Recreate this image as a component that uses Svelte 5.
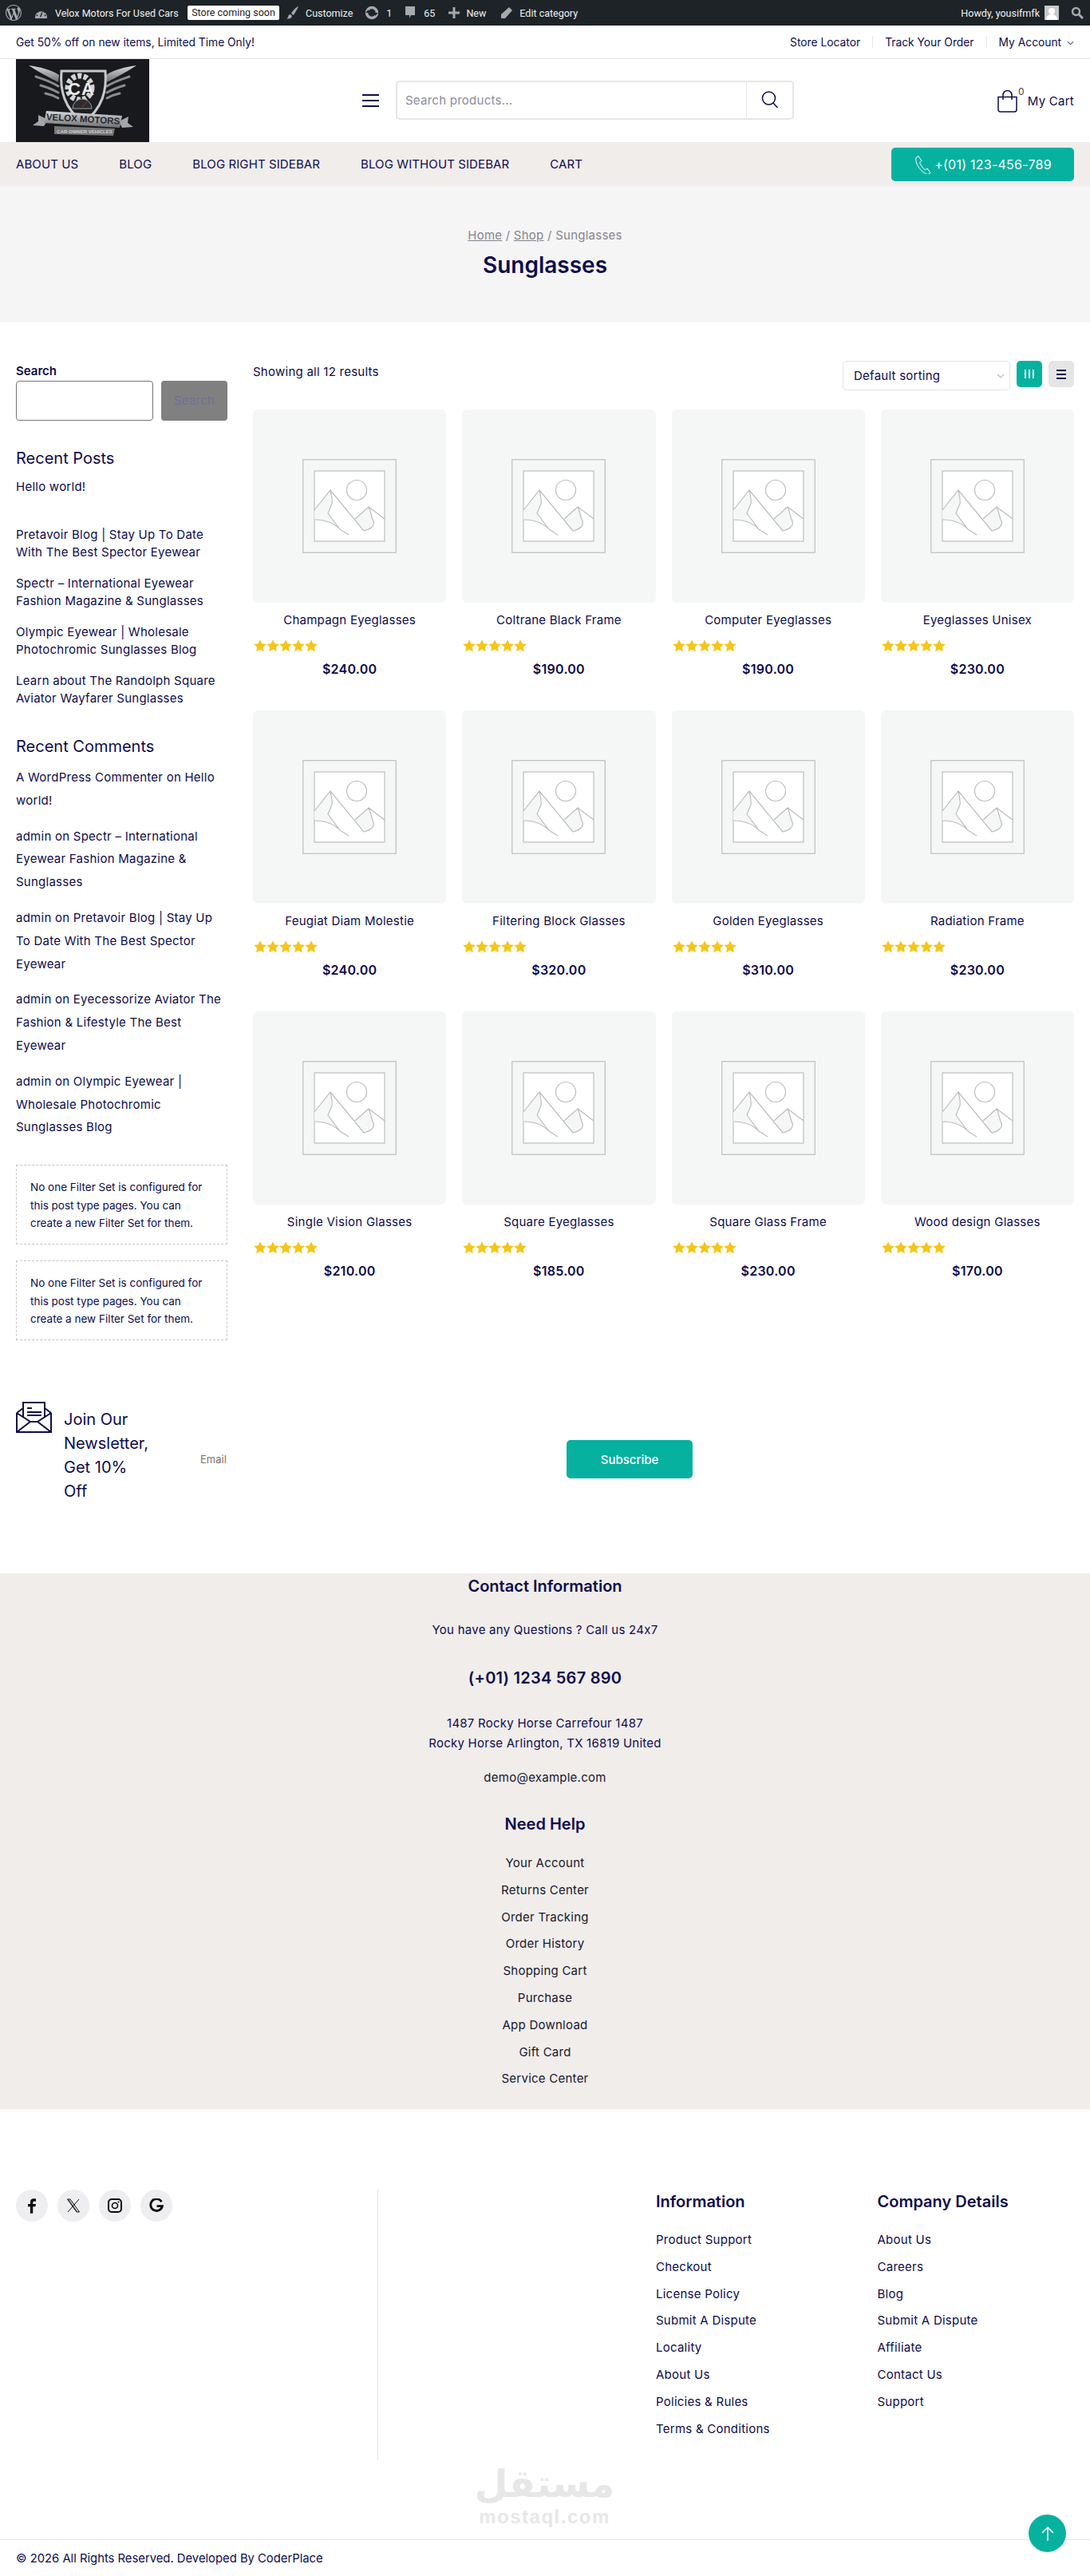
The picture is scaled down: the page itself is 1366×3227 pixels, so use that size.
<script>
	const products = [
		{ name: 'Champagn Eyeglasses', price: '$240.00' },
		{ name: 'Coltrane Black Frame', price: '$190.00' },
		{ name: 'Computer Eyeglasses', price: '$190.00' },
		{ name: 'Eyeglasses Unisex', price: '$230.00' },
		{ name: 'Feugiat Diam Molestie', price: '$240.00' },
		{ name: 'Filtering Block Glasses', price: '$320.00' },
		{ name: 'Golden Eyeglasses', price: '$310.00' },
		{ name: 'Radiation Frame', price: '$230.00' },
		{ name: 'Single Vision Glasses', price: '$210.00' },
		{ name: 'Square Eyeglasses', price: '$185.00' },
		{ name: 'Square Glass Frame', price: '$230.00' },
		{ name: 'Wood design Glasses', price: '$170.00' }
	];
	const navItems = ['ABOUT US', 'BLOG', 'BLOG RIGHT SIDEBAR', 'BLOG WITHOUT SIDEBAR', 'CART'];
	const recentPosts = [
		'Pretavoir Blog | Stay Up To Date With The Best Spector Eyewear',
		'Spectr – International Eyewear Fashion Magazine & Sunglasses',
		'Olympic Eyewear | Wholesale Photochromic Sunglasses Blog',
		'Learn about The Randolph Square Aviator Wayfarer Sunglasses'
	];
	const comments = [
		'A WordPress Commenter on Hello world!',
		'admin on Spectr – International Eyewear Fashion Magazine & Sunglasses',
		'admin on Pretavoir Blog | Stay Up To Date With The Best Spector Eyewear',
		'admin on Eyecessorize Aviator The Fashion & Lifestyle The Best Eyewear',
		'admin on Olympic Eyewear | Wholesale Photochromic Sunglasses Blog'
	];
	const helpLinks = ['Your Account', 'Returns Center', 'Order Tracking', 'Order History', 'Shopping Cart', 'Purchase', 'App Download', 'Gift Card', 'Service Center'];
	const infoLinks = ['Product Support', 'Checkout', 'License Policy', 'Submit A Dispute', 'Locality', 'About Us', 'Policies & Rules', 'Terms & Conditions'];
	const companyLinks = ['About Us', 'Careers', 'Blog', 'Submit A Dispute', 'Affiliate', 'Contact Us', 'Support'];
	const starPath = 'M6.5 0.5l1.8 3.9 4.2.5-3.1 2.9.8 4.2-3.7-2.1-3.7 2.1.8-4.2L.5 4.9l4.2-.5z';
	const wordpressPath = 'M20 10c0-5.51-4.49-10-10-10C4.48 0 0 4.49 0 10c0 5.52 4.48 10 10 10 5.51 0 10-4.48 10-10zM7.78 15.37L4.37 6.22c.55-.02 1.17-.08 1.17-.08.5-.06.44-1.13-.06-1.11 0 0-1.45.11-2.37.11-.18 0-.37 0-.58-.01C4.12 2.69 6.87 1.11 10 1.11c2.33 0 4.45.87 6.05 2.34-.68-.11-1.65.39-1.65 1.58 0 .74.45 1.36.9 2.1.35.61.55 1.36.55 2.46 0 1.49-1.4 5-1.4 5l-3.03-8.37c.54-.02.82-.17.82-.17.5-.05.44-1.25-.06-1.22 0 0-1.44.12-2.38.12-.87 0-2.33-.12-2.33-.12-.5-.03-.56 1.2-.06 1.22l.92.08 1.26 3.41zM17.41 10c.24-.64.74-1.87.43-4.25.7 1.29 1.05 2.71 1.05 4.25 0 3.29-1.73 6.24-4.4 7.78.97-2.59 1.94-5.2 2.92-7.78zM6.1 18.09C3.12 16.65 1.11 13.53 1.11 10c0-1.3.23-2.48.72-3.59C3.25 10.3 4.67 14.2 6.1 18.09zm4.03-6.63l2.58 6.98c-.86.29-1.76.45-2.71.45-.79 0-1.57-.11-2.29-.33.81-2.38 1.62-4.74 2.42-7.1z';
</script>

<div class="page">
	<div class="adminbar">
		<svg class="ab-wp" viewBox="0 0 20 20" width="20" height="20"><path d={wordpressPath} fill="#a7aaad" /></svg>
		<svg class="ab-dash" viewBox="0 0 16 14" width="15" height="13"><path d="M0 12.5a8 8 0 1 1 16 0V14H0z" fill="#a7aaad" /><g fill="#1d2327"><circle cx="8" cy="3" r="1" /><circle cx="3.5" cy="5.5" r="1" /><circle cx="12.500" cy="5.500" r="1" /><circle cx="2.500" cy="10" r="1" /><circle cx="13.500" cy="10" r="1" /></g><path d="M7 12l2.500-6" stroke="#1d2327" stroke-width="1.500" /></svg>
		<span class="ab-site">Velox Motors For Used Cars</span>
		<span class="ab-badge">Store coming soon</span>
		<svg class="ab-brush" viewBox="0 0 16 18" width="16" height="18"><path d="M15 1c-3 1-7 5-9 9l3 2c2-4 5-8 6-11zM5 11c-2 0-3 2-3 3s-1 2-2 2c2 1 6 1 7-3z" fill="#a7aaad" /></svg>
		<span class="ab-text">Customize</span>
		<svg class="ab-update" viewBox="0 0 18 18" width="18" height="18"><circle cx="9" cy="9" r="6.500" fill="none" stroke="#a7aaad" stroke-width="3.500" /><path d="M1 9l4-4v4zM17 9l-4 4V9z" fill="#1d2327" /></svg>
		<span class="ab-text">1</span>
		<svg class="ab-comment" viewBox="0 0 14 18" width="14" height="18"><path d="M1 1h12v11H8l-2 4v-4H1z" fill="#a7aaad" /></svg>
		<span class="ab-text">65</span>
		<svg class="ab-plus" viewBox="0 0 16 16" width="16" height="16"><path d="M6.500 1h3v5.500H15v3H9.500V15h-3V9.500H1v-3h5.500z" fill="#a7aaad" /></svg>
		<span class="ab-text">New</span>
		<svg class="ab-pencil" viewBox="0 0 16 16" width="16" height="16"><path d="M11 1l4 4-9 10-5 0 0-5z" fill="#a7aaad" /></svg>
		<span class="ab-text">Edit category</span>
		<span class="ab-howdy">Howdy, yousifmfk</span>
		<span class="ab-avatar"><svg viewBox="0 0 18 18" width="18" height="18"><rect width="18" height="18" fill="#c8c8c8" /><circle cx="9" cy="7" r="4" fill="#fff" /><path d="M2 18c0-5 3-7 7-7s7 2 7 7z" fill="#fff" /></svg></span>
		<svg class="ab-search" viewBox="0 0 16 16" width="16" height="16"><circle cx="6.500" cy="6.500" r="4.500" fill="none" stroke="#a7aaad" stroke-width="2.400" /><path d="M10 10l5 5" stroke="#a7aaad" stroke-width="3" /></svg>
	</div>

	<div class="topbar">
		<span>Get 50% off on new items, Limited Time Only!</span>
		<div class="top-links">
			<span>Store Locator</span>
			<i></i>
			<span>Track Your Order</span>
			<i></i>
			<span class="account">My Account
				<svg viewBox="0 0 10 6" width="9" height="6"><path d="M1 1l4 4 4-4" fill="none" stroke="#0e0c4c" stroke-width="1.100" /></svg>
			</span>
		</div>
	</div>

	<header class="header">
		<svg class="logo" viewBox="0 0 167 104" width="167" height="104">
			<defs>
				<linearGradient id="chrome" x1="0" y1="0" x2="0" y2="1">
					<stop offset="0" stop-color="#d8d8da" />
					<stop offset="1" stop-color="#6d6e72" />
				</linearGradient>
			</defs>
			<rect width="167" height="104" fill="#17191d" />
			<g fill="none" stroke="url(#chrome)" stroke-linecap="round">
				<path d="M16 8c14 2 28 5 38 12l-1 9C40 22 28 16 16 8z" fill="url(#chrome)" stroke="none" />
				<path d="M151 8c-14 2-28 5-38 12l1 9c13-7 25-13 37-21z" fill="url(#chrome)" stroke="none" />
				<path d="M25 22c9 3 19 6 28 12M31 33c7 2 15 5 22 9M37 43c5 1 11 3 16 6" stroke-width="3" stroke="#8b8c90" />
				<path d="M142 22c-9 3-19 6-28 12M136 33c-7 2-15 5-22 9M130 43c-5 1-11 3-16 6" stroke-width="3" stroke="#8b8c90" />
			</g>
			<path d="M57 15h55c2 24-3 46-27.500 65C60 61 55 39 57 15z" fill="#1c1e22" stroke="#c9c9cb" stroke-width="3" />
			<circle cx="80" cy="36" r="15" fill="none" stroke="#d4d4d4" stroke-width="7" stroke-dasharray="5 2.500" />
			<text x="73" y="45" class="logo-ca">C</text>
			<text x="90" y="45" class="logo-ca">A</text>
			<path d="M71 62a12 12 0 0 1 24 0z" fill="#2a2c30" stroke="#9c9c9f" stroke-width="1" />
			<path d="M83 60l7-8" stroke="#a8332c" stroke-width="1" />
			<path d="M28 70l12 6-5 8-14-1 7-5zM141 72l-12 6 4 8 14-1-7-5z" fill="#a5a6a9" />
			<path d="M38 65l95 6-3 15-95-6z" fill="url(#chrome)" />
			<text x="84" y="79" text-anchor="middle" class="logo-text" transform="rotate(3.500 84 76)">VELOX MOTORS</text>
			<path d="M48 84l76 3-2 9-74-2z" fill="#777" />
			<text x="86" y="93" text-anchor="middle" class="logo-sub">CAR OWNER VEHICLES</text>
		</svg>
		<button class="burger" aria-label="Menu"><span></span><span></span><span></span></button>
		<div class="search">
			<span class="search-ph">Search products...</span>
			<span class="search-btn">
				<svg viewBox="0 0 24 24" width="24" height="24"><circle cx="10.500" cy="10" r="8" fill="none" stroke="#0e0c4c" stroke-width="1.500" /><path d="M16 16l5.500 6" stroke="#0e0c4c" stroke-width="1.500" /></svg>
			</span>
		</div>
		<div class="cart">
			<svg viewBox="0 0 25 29" width="25" height="29"><path d="M1 9.500h23v16a2.500 2.500 0 0 1-2.500 2.500h-18A2.500 2.500 0 0 1 1 25.500z" fill="none" stroke="#0e0c4c" stroke-width="1.500" /><path d="M7 13V7a5.500 5.500 0 0 1 11 0v6" fill="none" stroke="#0e0c4c" stroke-width="1.500" /></svg>
			<sup>0</sup>
			<span>My Cart</span>
		</div>
	</header>

	<nav class="nav">
		<ul>
			{#each navItems as item}
				<li>{item}</li>
			{/each}
		</ul>
		<div class="phone">
			<svg viewBox="0 0 22 24" width="22" height="24"><path d="M3 3.500l3-2 4 6-2.500 2c1 3 4 7.500 7 9.500l2.500-2 4 5.500-3 2C11 24 1 11 3 3.500z" fill="none" stroke="#fff" stroke-width="1" /></svg>
			+(01) 123-456-789
		</div>
	</nav>

	<section class="hero">
		<div class="crumbs"><u>Home</u> / <u>Shop</u> / Sunglasses</div>
		<h1>Sunglasses</h1>
	</section>

	<main class="shop">
		<aside class="sidebar">
			<div class="side-search">
				<div class="side-label">Search</div>
				<div class="side-row">
					<div class="side-input"></div>
					<div class="side-btn">Search</div>
				</div>
			</div>

			<h2 class="recent-posts">Recent Posts</h2>
			<p class="hello">Hello world!</p>
			<ul class="posts">
				{#each recentPosts as post}
					<li>{post}</li>
				{/each}
			</ul>

			<h2 class="recent-comments">Recent Comments</h2>
			<ul class="comments">
				{#each comments as comment}
					<li>{comment}</li>
				{/each}
			</ul>

			<div class="notice first">No one Filter Set is configured for this post type pages. You can create a new Filter Set for them.</div>
			<div class="notice">No one Filter Set is configured for this post type pages. You can create a new Filter Set for them.</div>
		</aside>

		<div class="catalog">
			<div class="toolbar">
				<span class="results">Showing all 12 results</span>
				<div class="sorting">
					<div class="select">
						Default sorting
						<svg viewBox="0 0 10 6" width="10" height="6"><path d="M1 1l4 4 4-4" fill="none" stroke="#bbb" stroke-width="1.200" /></svg>
					</div>
					<div class="view active"><span class="bar"></span><span class="bar"></span><span class="bar"></span></div>
					<div class="view"><span class="line"></span><span class="line"></span><span class="line"></span></div>
				</div>
			</div>

			<div class="grid">
				{#each products as product}
					<article class="card">
						<div class="thumb">
							<svg viewBox="0 0 118 118" width="118" height="118">
								<rect x="0.750" y="0.750" width="116.500" height="116.500" fill="#f5f7f7" stroke="#bcbdc0" stroke-width="1.200" />
								<rect x="15" y="15" width="88" height="88" fill="#fff" stroke="#bcbdc0" stroke-width="1.200" />
								<circle cx="68" cy="39" r="12.500" fill="none" stroke="#bcbdc0" stroke-width="1.200" />
								<path d="M35 39L15 64v12c12 0 24 4 32 12l-15-20 5-12z" fill="#f5f7f7" />
								<path d="M83 60L66 75l11 15c8-2 14-6 12-12-3-6-3-12-6-18z" fill="#f5f7f7" />
								<path d="M15 64L35 39l42 51c8-2 14-6 12-12-3-6-3-12-6-18L66 75M83 60l20 15M35 39c1 6 3 12 2 17l-5 12 15 20 11 7M15 76c12 0 24 4 32 12" fill="none" stroke="#bcbdc0" stroke-width="1.200" />
							</svg>
						</div>
						<h3>{product.name}</h3>
						<div class="stars">
							{#each [0, 1, 2, 3, 4] as star (star)}
								<svg viewBox="0.4 0.4 12.2 12.2" width="16" height="16"><path d={starPath} fill="#f5c518" /></svg>
							{/each}
						</div>
						<div class="price">{product.price}</div>
					</article>
				{/each}
			</div>
		</div>
	</main>

	<section class="newsletter">
		<svg class="mail" viewBox="0 0 45 39" width="45" height="39">
			<path d="M1 14v24h43V14M1 14l8-6M44 14l-8-6M1 38l17-13h9l17 13M1 14l17 11M44 14L27 25" fill="none" stroke="#0e0c4c" stroke-width="2" />
			<path d="M9 20V1h27v19" fill="none" stroke="#0e0c4c" stroke-width="2" />
			<path d="M14 8h6M14 13h18M14 17h18" stroke="#0e0c4c" stroke-width="2" />
		</svg>
		<div class="join">Join Our Newsletter, Get 10% Off</div>
		<label class="email" for="news-email">Email</label>
		<input id="news-email" class="email-input" type="text" />
		<button class="subscribe">Subscribe</button>
	</section>

	<section class="contact">
		<h4 class="contact-title">Contact Information</h4>
		<p class="questions">You have any Questions ? Call us 24x7</p>
		<p class="tel">(+01) 1234 567 890</p>
		<p class="address">1487 Rocky Horse Carrefour 1487<br />Rocky Horse Arlington, TX 16819 United</p>
		<p class="mail-addr">demo@example.com</p>
		<h4 class="help-title">Need Help</h4>
		<ul class="help">
			{#each helpLinks as link}
				<li>{link}</li>
			{/each}
		</ul>
	</section>

	<footer class="footer">
		<div class="socials">
			<span class="social"><svg viewBox="0 0 12 22" width="10" height="19"><path d="M3.500 22V12H0V8h3.500V5c0-3.300 2-5 5-5H12v4H9.500C8 4 7.500 4.700 7.500 6v2H12l-.7 4H7.500v10z" fill="#0a0a0a" /></svg></span>
			<span class="social"><svg viewBox="0 0 18 18" width="18" height="18"><path d="M1.500 1h3.500l11.500 16H13zM16 1L2 17" fill="none" stroke="#0a0a0a" stroke-width="1" /><path d="M3 1.500l10.500 15" stroke="#0a0a0a" stroke-width="0.800" /></svg></span>
			<span class="social"><svg viewBox="0 0 18 18" width="18" height="18"><rect x="1" y="1" width="16" height="16" rx="4" fill="none" stroke="#0a0a0a" stroke-width="2" /><circle cx="9" cy="9" r="3.500" fill="none" stroke="#0a0a0a" stroke-width="1.600" /><circle cx="13.500" cy="4.500" r="1" fill="#0a0a0a" /></svg></span>
			<span class="social"><svg viewBox="0 0 18 18" width="18" height="18"><path d="M15.500 4.200A7.400 7.400 0 1 0 16.400 9.600H9.500" fill="none" stroke="#0a0a0a" stroke-width="2.800" /></svg></span>
		</div>
		<div class="foot-col info">
			<h5>Information</h5>
			<ul>
				{#each infoLinks as link}
					<li>{link}</li>
				{/each}
			</ul>
		</div>
		<div class="foot-col company">
			<h5>Company Details</h5>
			<ul>
				{#each companyLinks as link}
					<li>{link}</li>
				{/each}
			</ul>
		</div>
		<div class="watermark">
			<span class="wm-ar">مستقل</span>
			<span class="wm-en">mostaql.com</span>
		</div>
	</footer>

	<div class="copyright">© 2026 All Rights Reserved. Developed By CoderPlace</div>

	<button class="to-top" aria-label="Back to top">
		<svg viewBox="0 0 20 20" width="20" height="20"><path d="M10 19V2M3 9l7-7 7 7" fill="none" stroke="#fff" stroke-width="1.500" /></svg>
	</button>
</div>

<style>
	:global(body) {
		margin: 0;
		background: #fff;
	}

	.page {
		position: relative;
		width: 1366px;
		height: 3227px;
		overflow: hidden;
		font-family: Inter, 'Noto Sans', sans-serif;
		font-size: 15px;
		letter-spacing: 0.25px;
		color: #0e0c4c;
	}

	h1, h2, h3, h4, h5, p, ul {
		margin: 0;
		padding: 0;
		font-weight: 400;
	}

	ul {
		list-style: none;
	}

	/* admin bar */
	.adminbar {
		display: flex;
		align-items: center;
		height: 32px;
		background: #1d2327;
		color: #f0f0f1;
		font-family: Roboto, sans-serif;
		font-size: 12.500px;
		letter-spacing: 0;
	}

	.ab-wp { margin-left: 7px; }
	.ab-dash { margin-left: 17px; }
	.ab-site { margin-left: 10px; width: 158px; white-space: nowrap; }
	.ab-badge {
		margin-left: 8px;
		width: 115px;
		height: 18px;
		line-height: 18px;
		text-align: center;
		background: #fff;
		color: #1d2327;
		border-radius: 2px;
		font-size: 12.500px;
	}
	.ab-brush { margin: 0 8px 0 9px; }
	.ab-update { margin: 0 9px 0 15px; }
	.ab-comment { margin: 0 10px 0 16px; }
	.ab-plus { margin: 0 7px 0 16px; }
	.ab-pencil { margin: 0 8px 0 18px; }
	.ab-howdy { margin-left: auto; }
	.ab-avatar { margin-left: 6px; height: 18px; }
	.ab-search { margin: 0 8px 0 15px; }

	/* top strip */
	.topbar {
		display: flex;
		justify-content: space-between;
		align-items: center;
		height: 41px;
		padding: 0 20px;
		border-bottom: 1px solid #e5e5e5;
		font-size: 13.800px;
		letter-spacing: 0;
	}

	.top-links {
		display: flex;
		align-items: center;
		gap: 15px;
	}

	.top-links i {
		width: 1px;
		height: 15px;
		background: #e5e5e5;
	}

	.account svg {
		margin-left: 3px;
		vertical-align: 1px;
	}

	/* logo, search and cart */
	.header {
		position: relative;
		display: flex;
		align-items: center;
		height: 104px;
		padding: 0 20px;
	}

	.logo { flex: none; }

	.logo-text {
		font-family: 'Liberation Sans', sans-serif;
		font-size: 11.500px;
		font-weight: 700;
		letter-spacing: 0;
		fill: #24262a;
	}

	.logo-sub {
		font-family: 'Liberation Sans', sans-serif;
		font-size: 6px;
		font-weight: 700;
		letter-spacing: 0;
		fill: #d0d0d0;
	}

	.logo-ca {
		font-family: 'Liberation Sans', sans-serif;
		font-size: 22px;
		font-weight: 700;
		letter-spacing: 0;
		fill: #ececec;
		text-anchor: middle;
	}

	.burger {
		display: flex;
		flex-direction: column;
		gap: 5px;
		width: 21px;
		margin: 0 21px 0 267px;
		padding: 0;
		border: 0;
		background: none;
	}

	.burger span {
		height: 2px;
		background: #0e0c4c;
	}

	.search {
		display: flex;
		align-items: center;
		box-sizing: border-box;
		width: 499px;
		height: 49px;
		margin-top: -2px;
		border: 2px solid #e5e5e5;
		border-radius: 5px;
	}

	.search-ph {
		flex: 1;
		padding-left: 10px;
		color: #8c8ca0;
		font-size: 15px;
	}

	.search-btn {
		display: flex;
		align-items: center;
		justify-content: center;
		width: 57px;
		height: 100%;
		border-left: 1px solid #e5e5e5;
	}

	.cart {
		display: flex;
		align-items: center;
		margin-left: auto;
	}

	.cart sup {
		align-self: flex-start;
		margin: -4px 4px 0 1px;
		font-size: 12px;
		line-height: 14px;
		color: #444;
	}

	/* nav */
	.nav {
		display: flex;
		justify-content: space-between;
		align-items: center;
		height: 55px;
		padding: 0 20px;
		background: #f0edeb;
	}

	.nav ul {
		display: flex;
		gap: 51px;
		font-size: 15px;
		letter-spacing: 0.1px;
	}

	.phone {
		display: flex;
		align-items: center;
		justify-content: center;
		gap: 4px;
		width: 229px;
		height: 42px;
		border-radius: 5px;
		background: #06b1a0;
		color: #fff;
		font-size: 16px;
	}

	/* page title */
	.hero {
		box-sizing: border-box;
		height: 170px;
		padding-top: 52px;
		background: #f5f5f5;
		border-bottom: 1px solid #efefef;
		text-align: center;
	}

	.crumbs {
		font-size: 15px;
		line-height: 20px;
		color: #85858f;
	}

	.hero h1 {
		margin-top: 9px;
		font-size: 28px;
		line-height: 36px;
		font-weight: 600;
		letter-spacing: 0;
		color: #0e0c4c;
	}

	/* shop */
	.shop {
		display: grid;
		grid-template-columns: 265px 1029px;
		gap: 32px;
		height: 1335px;
		padding: 0 20px;
	}

	.sidebar {
		padding-top: 52px;
	}

	.side-label {
		font-size: 15px;
		line-height: 20px;
		font-weight: 600;
		letter-spacing: 0;
	}

	.side-row {
		display: flex;
		gap: 10px;
		margin-top: 2px;
	}

	.side-input {
		box-sizing: border-box;
		width: 172px;
		height: 50px;
		border: 1px solid #76767a;
		border-radius: 4px;
	}

	.side-btn {
		width: 83px;
		height: 50px;
		line-height: 50px;
		text-align: center;
		border-radius: 4px;
		background: #808080;
		color: #6f7096;
	}

	.recent-posts {
		margin-top: 34px;
		font-size: 20px;
		line-height: 26px;
		letter-spacing: 0;
	}

	.hello {
		margin-top: 12px;
		line-height: 22px;
	}

	.posts {
		margin-top: 38px;
		display: flex;
		flex-direction: column;
		gap: 17px;
		line-height: 22px;
	}

	.recent-comments {
		margin-top: 36px;
		font-size: 20px;
		line-height: 26px;
		letter-spacing: 0;
	}

	.comments {
		margin-top: 12px;
		display: flex;
		flex-direction: column;
		gap: 16px;
		line-height: 28.800px;
	}

	.notice {
		box-sizing: border-box;
		height: 100px;
		margin-top: 20px;
		padding: 16px 24px 16px 17px;
		border: 1px dashed #c8c8c8;
		font-size: 13.500px;
		line-height: 22.500px;
		letter-spacing: 0;
	}

	.notice.first {
		margin-top: 32px;
	}

	.toolbar {
		display: flex;
		justify-content: space-between;
		align-items: flex-start;
		height: 110px;
		padding-top: 49px;
		box-sizing: border-box;
	}

	.results {
		margin-top: 4px;
		line-height: 20px;
	}

	.sorting {
		display: flex;
		gap: 8px;
	}

	.select {
		display: flex;
		align-items: center;
		justify-content: space-between;
		box-sizing: border-box;
		width: 210px;
		height: 37px;
		padding: 0 6px 0 13px;
		border: 1px solid #e5e5e5;
		border-radius: 5px;
	}

	.view {
		display: flex;
		align-items: center;
		justify-content: center;
		gap: 3px;
		width: 32px;
		height: 33px;
		border-radius: 5px;
		background: #e5e5e5;
		flex-direction: column;
	}

	.view.active {
		flex-direction: row;
		background: #06b1a0;
	}

	.bar {
		width: 2px;
		height: 11px;
		background: #fff;
	}

	.line {
		width: 12px;
		height: 2px;
		background: #0e0c4c;
	}

	.grid {
		display: grid;
		grid-template-columns: repeat(4, 1fr);
		column-gap: 20px;
		grid-auto-rows: 377px;
	}

	.card {
		text-align: center;
	}

	.thumb {
		display: flex;
		align-items: center;
		justify-content: center;
		height: 242px;
		border-radius: 6px;
		background: #f5f7f7;
	}

	.card h3 {
		margin-top: 12px;
		font-size: 15px;
		line-height: 20px;
	}

	.stars {
		display: flex;
		margin: 14px 0 0 1px;
		height: 16px;
	}

	.price {
		margin-top: 11px;
		font-size: 16px;
		line-height: 20px;
		font-weight: 600;
	}

	/* newsletter */
	.newsletter {
		display: flex;
		align-items: flex-start;
		height: 233px;
		padding: 18px 20px 0;
		box-sizing: border-box;
	}

	.mail {
		flex: none;
		margin-right: 15px;
	}

	.join {
		width: 110px;
		margin-top: 7px;
		font-size: 20px;
		line-height: 30px;
		letter-spacing: 0;
	}

	.email {
		margin: 63px 0 0 61px;
		font-size: 13px;
		line-height: 18px;
		letter-spacing: 0;
		color: #7f6f6a;
	}

	.email-input {
		width: 399px;
		height: 40px;
		margin-top: 46px;
		border: 0;
		outline: 0;
		background: none;
	}

	.subscribe {
		width: 158px;
		height: 48px;
		margin: 48px 478px 0 auto;
		border: 0;
		border-radius: 5px;
		background: #06b1a0;
		color: #fff;
		font-family: inherit;
		font-size: 15px;
		font-weight: 500;
	}

	/* contact band */
	.contact {
		box-sizing: border-box;
		height: 671px;
		background: #f0edeb;
		text-align: center;
	}

	.contact-title {
		padding-top: 3px;
		font-size: 20px;
		line-height: 26px;
		font-weight: 600;
		letter-spacing: 0;
	}

	.questions {
		margin-top: 31px;
		line-height: 22px;
	}

	.tel {
		margin-top: 36px;
		font-size: 20px;
		line-height: 26px;
		font-weight: 600;
	}

	.address {
		margin-top: 31px;
		line-height: 25px;
	}

	.mail-addr {
		margin-top: 20px;
		line-height: 22px;
		color: #17172c;
	}

	.help-title {
		margin-top: 34px;
		font-size: 20px;
		line-height: 26px;
		font-weight: 600;
		letter-spacing: 0;
	}

	.help {
		margin-top: 19px;
		line-height: 33.800px;
		color: #17172c;
	}

	/* footer */
	.footer {
		position: relative;
		display: flex;
		align-items: flex-start;
		box-sizing: border-box;
		height: 540px;
		padding: 101px 20px 0;
		border-bottom: 1px solid #e5e5e5;
	}

	.socials {
		display: flex;
		gap: 12px;
		box-sizing: border-box;
		width: 454px;
		height: 339px;
		border-right: 1px solid #e5e5e5;
	}

	.social {
		display: flex;
		align-items: center;
		justify-content: center;
		width: 40px;
		height: 40px;
		border-radius: 50%;
		background: #eeeef1;
	}

	.foot-col h5 {
		margin-top: 1px;
		font-size: 20px;
		line-height: 28px;
		font-weight: 600;
		letter-spacing: 0;
	}

	.foot-col ul {
		margin-top: 17px;
		line-height: 33.800px;
	}

	.info {
		width: 277.500px;
		margin-left: 348px;
	}

	.watermark {
		position: absolute;
		left: 600px;
		top: 441px;
		display: flex;
		flex-direction: column;
		align-items: center;
		width: 165px;
		color: #e7e7e7;
		font-weight: 700;
	}

	.wm-ar {
		font-family: 'DejaVu Sans', sans-serif;
		font-size: 48px;
		line-height: 56px;
	}

	.wm-en {
		font-family: 'Liberation Sans', sans-serif;
		font-size: 24px;
		line-height: 28px;
		letter-spacing: 1.500px;
	}

	.copyright {
		padding: 13px 20px 0;
		font-size: 14.800px;
		line-height: 20px;
		letter-spacing: 0;
	}

	.to-top {
		position: absolute;
		left: 1289px;
		top: 3150px;
		display: flex;
		align-items: center;
		justify-content: center;
		width: 47px;
		height: 47px;
		padding: 0;
		border: 0;
		border-radius: 50%;
		background: #06b1a0;
	}
</style>
